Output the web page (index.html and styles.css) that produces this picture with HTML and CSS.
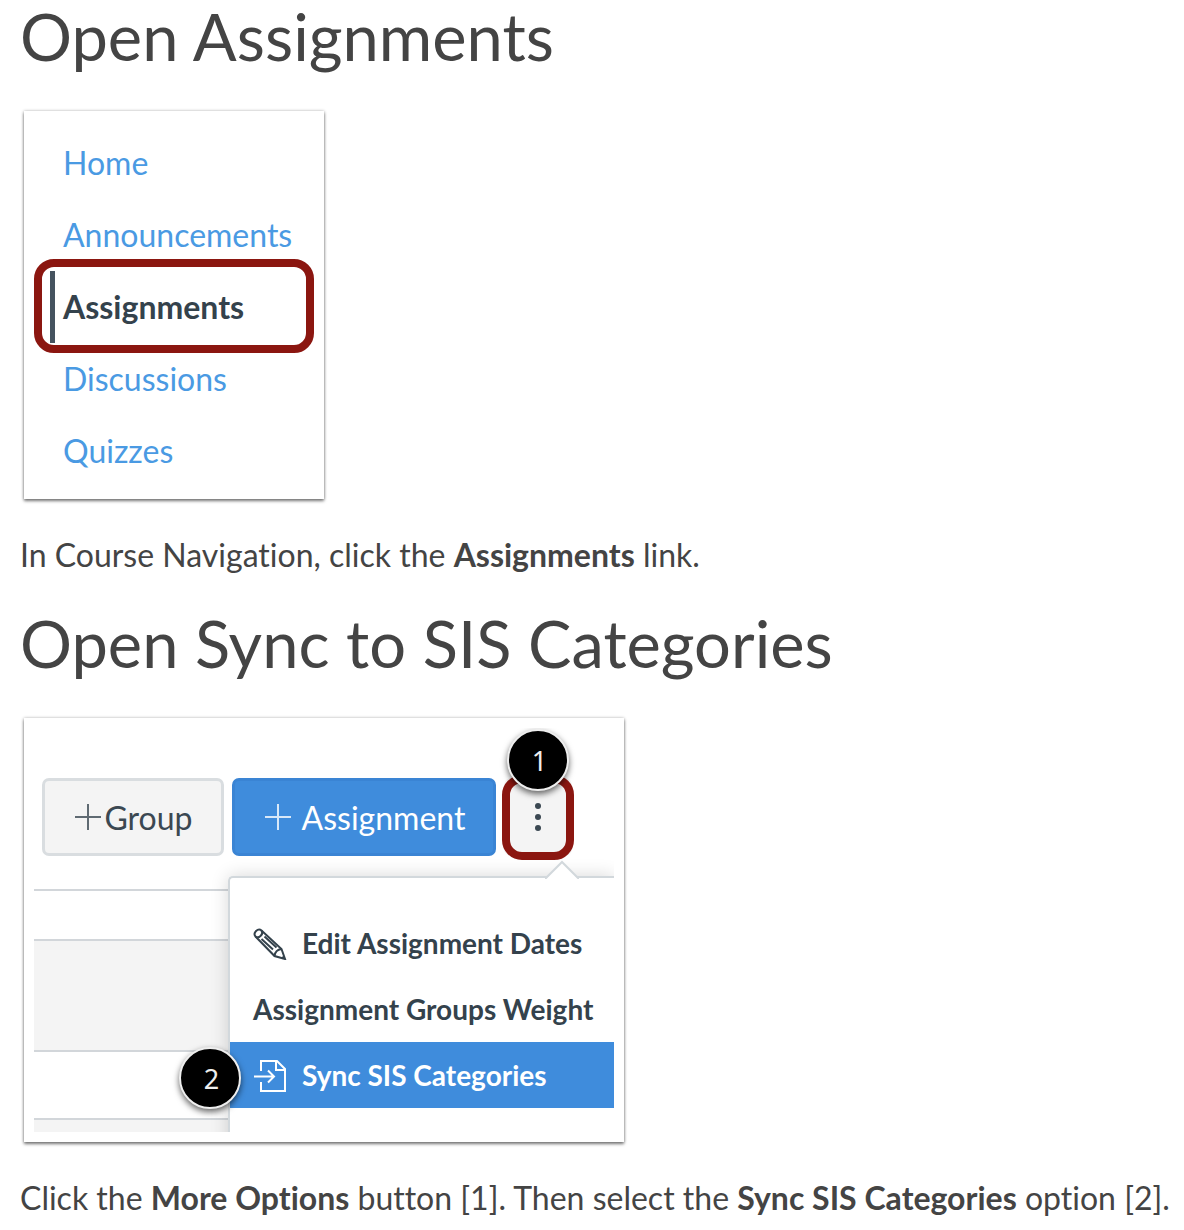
FILE: index.html
```html
<!DOCTYPE html>
<html lang="en">
<head>
<meta charset="utf-8">
<title>Sync to SIS Categories</title>
<meta name="viewport" content="width=device-width, initial-scale=1">
<link rel="stylesheet" href="styles.css">
</head>
<body>
<main class="guide">
  <section class="step">
    <h2 class="step-title">Open Assignments</h2>
    <div class="card card-nav">
      <nav aria-label="Course Navigation">
        <ul class="course-nav">
          <li><a href="#home">Home</a></li>
          <li><a href="#announcements">Announcements</a></li>
          <li class="active"><a href="#assignments" aria-current="page">Assignments</a></li>
          <li><a href="#discussions">Discussions</a></li>
          <li><a href="#quizzes">Quizzes</a></li>
        </ul>
      </nav>
    </div>
    <p class="step-text">In Course Navigation, click the <strong>Assignments</strong> link.</p>
  </section>

  <section class="step">
    <h2 class="step-title">Open Sync to SIS Categories</h2>
    <div class="card card-options">
      <div class="shot">
        <div class="toolbar">
          <button type="button" class="btn btn-group"><svg class="plus" viewBox="0 0 26 26" aria-hidden="true"><path d="M13 0v26M0 13h26"/></svg>Group</button>
          <button type="button" class="btn btn-primary"><svg class="plus" viewBox="0 0 26 26" aria-hidden="true"><path d="M13 0v26M0 13h26"/></svg>Assignment</button>
          <button type="button" class="btn btn-more" aria-label="More Options"><svg viewBox="0 0 8 30" width="8" height="30" aria-hidden="true"><circle cx="4" cy="4" r="3"/><circle cx="4" cy="15" r="3"/><circle cx="4" cy="26" r="3"/></svg><span class="badge badge-one">1</span></button>
        </div>
        <div class="list">
          <div class="row row-short"></div>
          <div class="row row-tall shaded"></div>
          <div class="row row-mid"></div>
          <div class="row row-cut shaded"></div>
          <div class="menu">
            <svg class="caret" viewBox="0 0 34 19" aria-hidden="true"><path class="caret-fill" d="M1 19 17 2 33 19z"/><path class="caret-line" d="M0 18h1L17 2l16 16h1"/></svg>
            <a href="#dates" class="menu-item">
              <svg class="icon icon-pencil" viewBox="0 -2 34 34" aria-hidden="true"><path d="M2.500 8.500C-.5 5 5 -.5 8.500 2.500L28.500 21 32 31 21.500 28z"/><path d="M2.500 8.500C6 11 11 6 8.500 2.500M21.500 28c.5-4 3-6.500 7-7M8.500 11 20 21.500M11.500 8.500 23.500 19.500M29 30.500l2-2"/></svg>
              Edit Assignment Dates
            </a>
            <a href="#weight" class="menu-item">Assignment Groups Weight</a>
            <a href="#sync" class="menu-item selected">
              <svg class="icon" viewBox="0 -1 34 34" aria-hidden="true"><path d="M8 12V2h16l8 8v22H8v-9M23 2v9h9M1 17.500h20M15 11.500l6 6-6 6"/></svg>
              Sync SIS Categories
              <span class="badge badge-two">2</span>
            </a>
          </div>
        </div>
      </div>
    </div>
    <p class="step-text">Click the <strong>More Options</strong> button [1]. Then select the <strong>Sync SIS Categories</strong> option [2].</p>
  </section>
</main>
</body>
</html>
```

FILE: styles.css
```css
* { box-sizing: border-box; }

body {
  margin: 0;
  background: #fff;
  color: #444;
  font-family: Lato, "Liberation Sans", sans-serif;
  font-variant-ligatures: none;
}

.guide { padding: 0 8px 0 20px; }
.step + .step { padding-top: 29px; }

.step-title {
  margin: 0 0 39px;
  font-size: 65px;
  font-weight: 400;
  line-height: 72px;
}

.step-text {
  margin: 33px 0 0;
  font-size: 32px;
  line-height: 46px;
}

/* Framed illustrations */
.card {
  margin-left: 4px;
  max-width: 100%;
  background: #fff;
  box-shadow: 0 2px 3px rgba(0, 0, 0, .5), 0 0 3px rgba(0, 0, 0, .25);
}
.card-nav { width: 300px; padding: 16px 10px 12px; }
.card-options { width: 600px; padding: 10px; }

/* Course navigation */
.course-nav {
  margin: 0;
  padding: 0 0 0 16px;
  list-style: none;
}
.course-nav li {
  position: relative;
  padding-left: 8px;
  border-left: 5px solid transparent;
  font-size: 32px;
  line-height: 72px;
}
.course-nav a { color: #4a9ae3; text-decoration: none; }
.course-nav .active { border-left-color: #45535f; }
.course-nav .active a { color: #34424c; font-weight: 700; }
.course-nav .active::after {
  content: "";
  position: absolute;
  inset: -12px 0 -10px -21px;
  border: 8px solid #8b1610;
  border-radius: 20px;
}

/* Assignments toolbar */
.shot { overflow: hidden; }
.toolbar {
  display: flex;
  gap: 8px;
  padding: 50px 0 0 8px;
}
.btn {
  display: flex;
  align-items: center;
  justify-content: center;
  height: 78px;
  padding: 0 0 0 2px;
  border: 3px solid #d9dde0;
  border-radius: 7px;
  background: #f4f4f4;
  color: #3b4852;
  font-family: inherit;
  font-size: 32px;
}
.btn-group { width: 182px; gap: 3px; }
.btn-primary {
  width: 264px;
  gap: 11px;
  border-color: #3a84d4;
  background: #3f8cdc;
  color: #fff;
}
.btn-more {
  position: relative;
  width: 68px;
  padding: 0;
  border-color: #f4f4f4;
}
.btn-more svg { fill: #3b4852; }
.btn-more::before {
  content: "";
  position: absolute;
  inset: -6px -5px -7px;
  border: 8px solid #8b1610;
  border-radius: 20px;
}
.plus {
  width: 26px;
  height: 26px;
  fill: none;
  stroke: currentColor;
  stroke-width: 2;
  opacity: .8;
}

.badge {
  position: absolute;
  display: flex;
  align-items: center;
  justify-content: center;
  width: 62px;
  height: 62px;
  padding-left: 3px;
  border: 2px solid #eee;
  border-radius: 50%;
  background: #000;
  box-shadow: 0 3px 6px rgba(0, 0, 0, .6);
  color: #eee;
  font: 400 27px "Noto Sans", sans-serif;
}
.badge-one { top: -52px; left: 0; }
.badge-two { top: 5px; left: -51px; }

/* Assignment rows behind the menu */
.list {
  position: relative;
  padding-top: 33px;
}
.row { border-top: 2px solid #d2d6da; }
.row-short { height: 50px; }
.row-tall { height: 111px; }
.row-mid { height: 68px; }
.row-cut { height: 14px; }
.shaded { background: #f4f4f4; }

.menu {
  position: absolute;
  top: 20px;
  right: 0;
  bottom: -20px;
  width: 386px;
  padding-top: 32px;
  border: solid #d2d8dc;
  border-width: 2px 0 0 2px;
  border-radius: 5px 0 0;
  background: #fff;
  box-shadow: 0 0 18px rgba(0, 0, 0, .16);
}
.caret {
  position: absolute;
  top: -18px;
  right: 35px;
  width: 34px;
  height: 19px;
}
.caret-fill { fill: #fff; }
.caret-line { fill: none; stroke: #d2d8dc; stroke-width: 2; }

.menu-item {
  position: relative;
  display: flex;
  align-items: center;
  gap: 15px;
  height: 66px;
  padding-left: 23px;
  color: #34424c;
  font-size: 28px;
  font-weight: 700;
  text-decoration: none;
  white-space: nowrap;
}
.selected { background: #3f8cdc; color: #fff; }
.icon {
  width: 34px;
  height: 34px;
  fill: none;
  stroke: currentColor;
  stroke-width: 2;
}
```
